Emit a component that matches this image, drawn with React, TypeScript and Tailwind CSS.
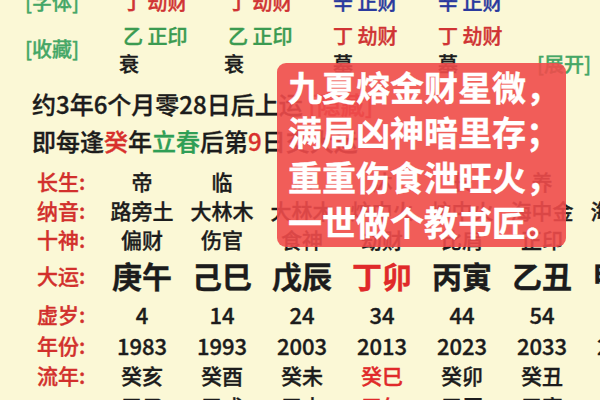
const font = "font-['Noto_Sans_CJK_SC','Noto_Sans',sans-serif]";

interface Col { cs: string; ny: string; ss: string; dy: string; age: string; yr: string; ln: string; nx: string; hot?: boolean; }

const cols: Col[] = [
  { cs: "帝", ny: "路旁土", ss: "偏财", dy: "庚午", age: "4", yr: "1983", ln: "癸亥", nx: "甲子" },
  { cs: "临", ny: "大林木", ss: "伤官", dy: "己巳", age: "14", yr: "1993", ln: "癸酉", nx: "甲戌" },
  { cs: "冠", ny: "大林木", ss: "食神", dy: "戊辰", age: "24", yr: "2003", ln: "癸未", nx: "甲申" },
  { cs: "沐", ny: "炉中火", ss: "劫财", dy: "丁卯", age: "34", yr: "2013", ln: "癸巳", nx: "甲午", hot: true },
  { cs: "长", ny: "炉中火", ss: "比肩", dy: "丙寅", age: "44", yr: "2023", ln: "癸卯", nx: "甲辰" },
  { cs: "养", ny: "海中金", ss: "正印", dy: "乙丑", age: "54", yr: "2033", ln: "癸丑", nx: "甲寅" },
  { cs: "胎", ny: "海中金", ss: "偏印", dy: "甲子", age: "64", yr: "2043", ln: "癸亥", nx: "甲子" },
];

const pillars = [
  { a: "丁 劫财", aC: "text-[#d03434]", b: "乙 正印", bC: "text-[#3b9b51]", c: "衰", w: "w-[105px]" },
  { a: "丁 劫财", aC: "text-[#d03434]", b: "乙 正印", bC: "text-[#3b9b51]", c: "衰", w: "w-[105px]" },
  { a: "辛 正财", aC: "text-[#2a3a9e]", b: "丁 劫财", bC: "text-[#d03434]", c: "墓", w: "w-[105px]" },
  { a: "辛 正财", aC: "text-[#2a3a9e]", b: "丁 劫财", bC: "text-[#d03434]", c: "墓", w: "w-[99px]" },
];

function Row({ label, values, h, big, num, hotCls }: { label: string; values: { t: string; hot?: boolean }[]; h: string; big?: boolean; num?: boolean; hotCls?: boolean }) {
  return (
    <div className={`grid grid-cols-[102px_repeat(7,80px)] items-center ${h}`}>
      <div className="pl-[37px] text-[21px] font-medium text-[#d2302c]">{label}</div>
      {values.map((v, i) => (
        <div
          key={i}
          className={`text-center whitespace-nowrap ${big ? "text-[30px] font-bold" : num ? "text-[22px] font-medium" : "text-[21px] font-medium"} ${v.hot && hotCls ? "text-[#e02a2a]" : "text-[#1c1c1c]"}`}
        >
          {v.t}
        </div>
      ))}
    </div>
  );
}

export default function App() {
  return (
    <div className={`${font} relative w-[600px] h-[400px] overflow-hidden bg-[#fbf8d6] [-webkit-text-stroke:0.35px_currentColor]`}>
      {/* pillars */}
      <div className="flex -mt-[15px] h-[90px]">
        <div className="w-[123px] pl-[25px] flex flex-col text-[20px] font-medium text-[#45a766]">
          <div className="h-[34px] leading-[34px]">[字体]</div>
          <div className="h-[34px] leading-[34px] mt-[13px]">[收藏]</div>
        </div>
        {pillars.map((p, i) => (
          <div key={i} className={`${p.w} flex flex-col text-[20px] font-medium whitespace-nowrap`}>
            <div className={`h-[34px] leading-[34px] ${p.aC}`}>{p.a}</div>
            <div className={`h-[34px] leading-[34px] ${p.bC}`}>{p.b}</div>
            <div className={`h-[22px] leading-[22px] text-[#1c1c1c] ${p.c === "衰" ? "-ml-[4px]" : ""}`}>{p.c}</div>
          </div>
        ))}
        <div className="pt-[68px] text-[20px] font-medium text-[#45a766] leading-[22px] whitespace-nowrap">[展开]</div>
      </div>

      <div className="pl-[32px] mt-[11px] h-[36px] leading-[36px] text-[24px] font-medium text-[#1c1c1c] whitespace-nowrap">
        约3年6个月零28日后上运 <span className="text-[#d03434]">[隐藏]</span>
      </div>
      <div className="pl-[32px] h-[38px] leading-[38px] text-[24px] font-medium text-[#1c1c1c] whitespace-nowrap">
        即每逢<span className="text-[#d8302c]">癸</span>年<span className="text-[#2f9e55]">立春</span>后第<span className="text-[#d8302c]">9</span>日交大运
      </div>

      <div className="pt-[6px]">
        <Row label="长生:" h="h-[29px]" values={cols.map((c) => ({ t: c.cs }))} />
        <Row label="纳音:" h="h-[29px]" values={cols.map((c) => ({ t: c.ny }))} />
        <Row label="十神:" h="h-[29px]" values={cols.map((c) => ({ t: c.ss }))} />
        <div className="mb-[5px]">
          <Row label="大运:" h="h-[40px]" big hotCls values={cols.map((c) => ({ t: c.dy, hot: c.hot }))} />
        </div>
        <Row label="虚岁:" h="h-[31px]" num values={cols.map((c) => ({ t: c.age }))} />
        <Row label="年份:" h="h-[31px]" num values={cols.map((c) => ({ t: c.yr }))} />
        <Row label="流年:" h="h-[31px]" hotCls values={cols.map((c) => ({ t: c.ln, hot: c.hot }))} />
        <Row label="" h="h-[31px]" hotCls values={cols.map((c) => ({ t: c.nx, hot: c.hot }))} />
      </div>

      {/* poem overlay */}
      <div className="absolute left-[277px] top-[63px] w-[289px] h-[184px] rounded-[9px] bg-[#ef4b4b]/90 pl-[11px] pt-[1px] text-[34px] leading-[45px] font-bold text-white whitespace-nowrap">
        <div>九夏熔金财星微，</div>
        <div>满局凶神暗里存；</div>
        <div>重重伤食泄旺火，</div>
        <div>一世做个教书匠。</div>
      </div>
    </div>
  );
}
